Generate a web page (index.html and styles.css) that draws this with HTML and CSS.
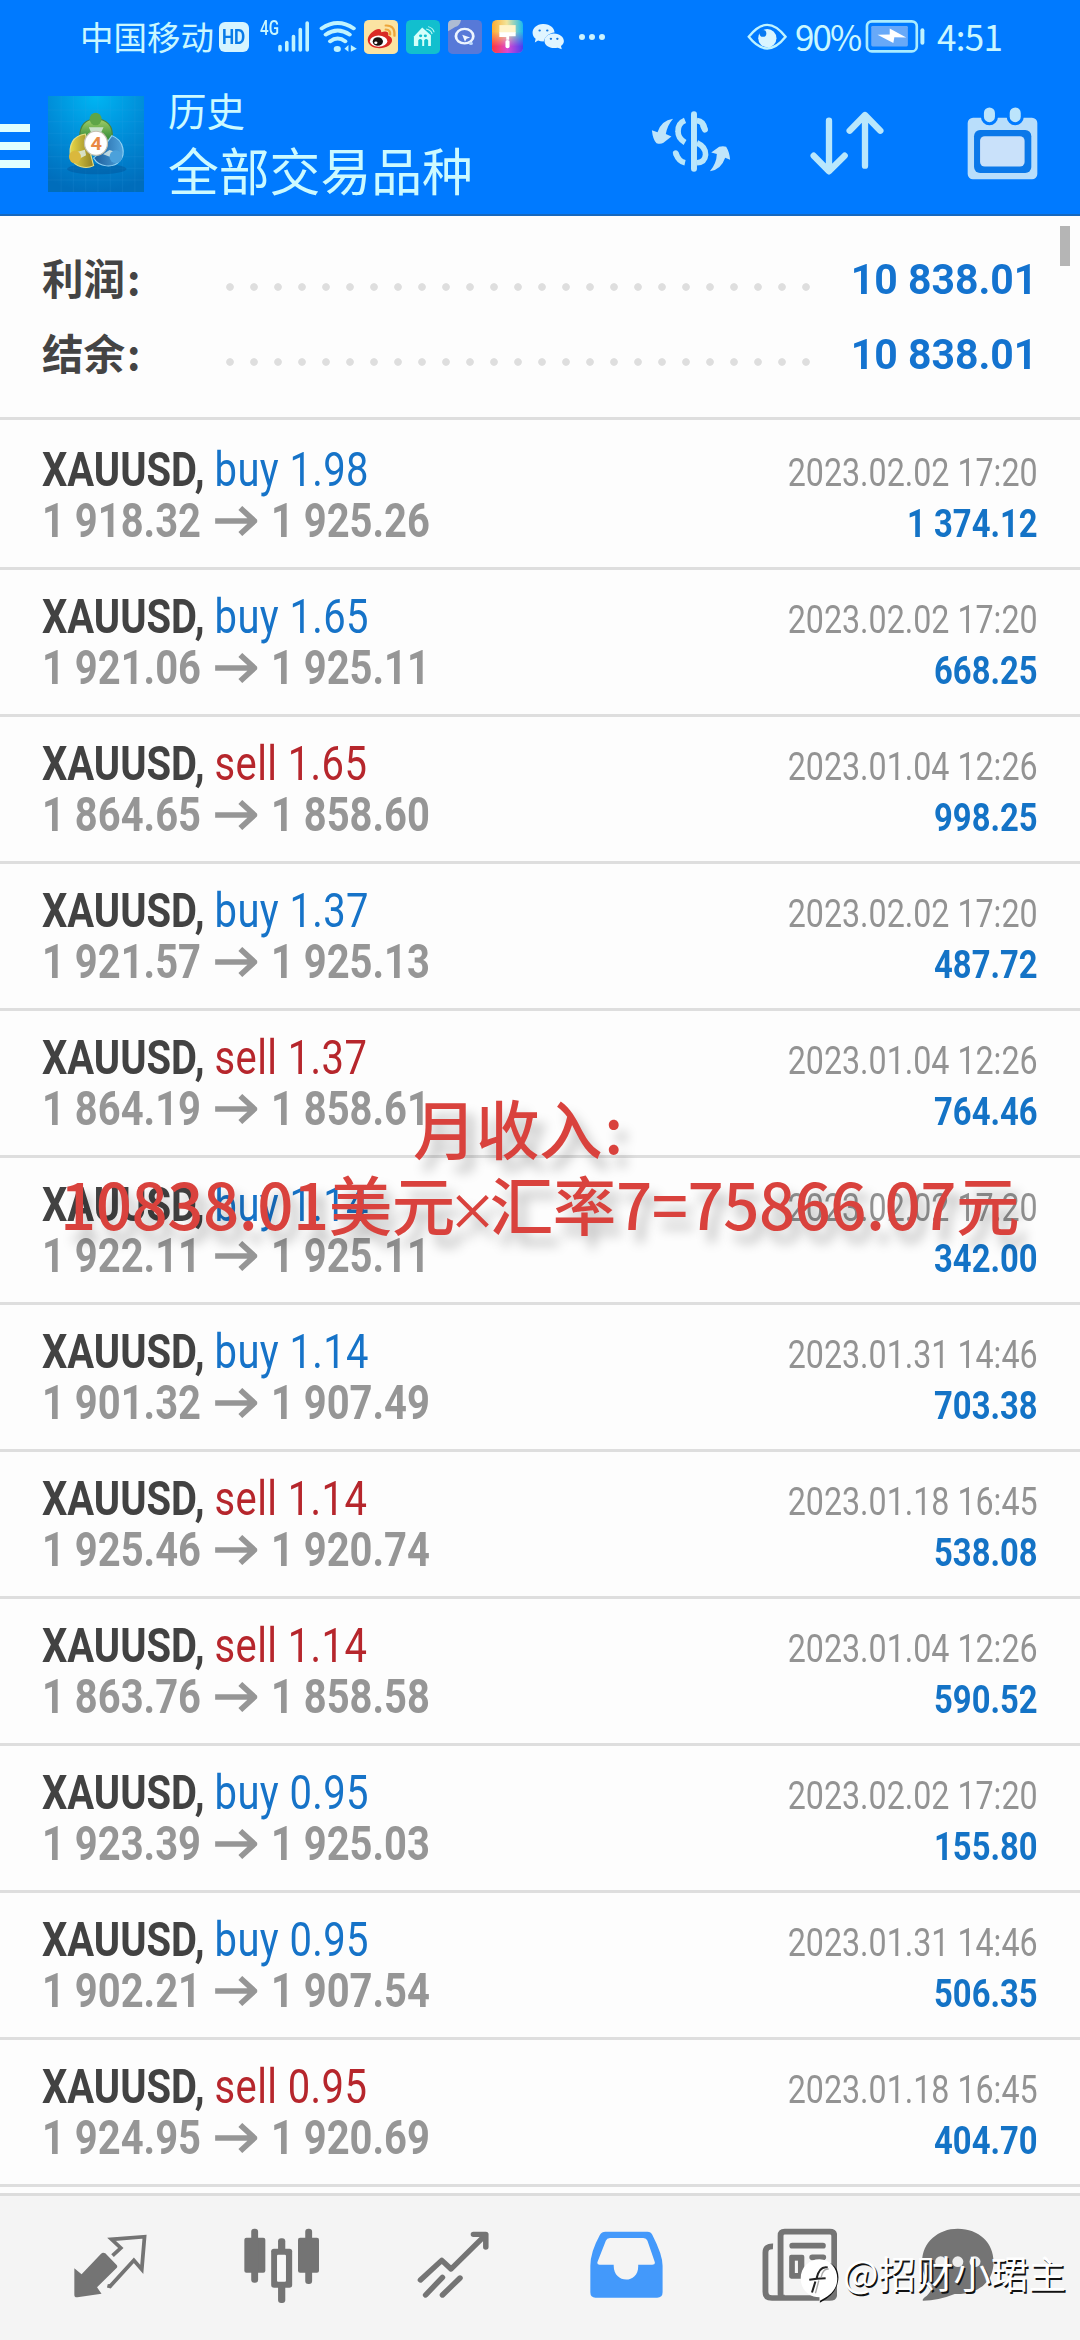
FILE: index.html
```html
<!DOCTYPE html>
<html lang="zh-CN">
<head>
<meta charset="utf-8">
<title>历史</title>
<link rel="stylesheet" href="styles.css">
</head>
<body>
<svg class="defs" aria-hidden="true">
  <symbol id="arrow" viewBox="0 0 42 30" preserveAspectRatio="none"><path d="M0 15H39M25 2L39 15L25 28" fill="none" stroke="currentColor" stroke-width="5.6"/></symbol>
</svg>
<div class="screen">
  <header class="header">
    <div class="status">
      <span class="carrier">中国移动</span>
      <span class="hd"><span>HD</span></span>
      <div class="net"><span>4G</span>
        <svg viewBox="0 0 33 31" width="33" height="31"><path d="M2 25.500V29M8.800 21.500V29M15.500 15.500V29M22.300 8.500V29M29.200 2V29" stroke="#bff3ff" stroke-width="3.600" stroke-linecap="round"/></svg>
      </div>
      <svg class="wifi" viewBox="806 60 98 96" preserveAspectRatio="none"><g fill="none" stroke="#bff3ff" stroke-width="11" stroke-linecap="round"><path d="M813 82Q853 50 893 82"/><path d="M823 101Q853 76 883 101"/><path d="M834 121Q853 104 872 121"/></g><circle cx="852" cy="144" r="9" fill="#bff3ff"/><path d="M870 143L880 132V152M886 152V132L901 143Z" fill="#bff3ff"/></svg>
      <svg class="app weibo" viewBox="918 57 86 103" preserveAspectRatio="none"><rect x="918" y="57" width="86" height="103" rx="13" fill="#fbe3a2"/><path d="M928 122C924 104 944 84 956 84C962 85 961 91 962 94C973 89 983 94 979 104C993 110 991 126 981 134C962 149 932 143 928 122Z" fill="#d92925"/><ellipse cx="955" cy="121" rx="22" ry="17" fill="#fff"/><circle cx="953" cy="122" r="13" fill="#17110f"/><circle cx="948" cy="126" r="4" fill="#fff"/><path d="M973 74Q997 73 995 105M973 86Q985 86 984 101" fill="none" stroke="#eda53a" stroke-width="6" stroke-linecap="round"/></svg>
      <svg class="app home" viewBox="1024 57 86 103" preserveAspectRatio="none"><rect x="1024" y="57" width="86" height="103" rx="14" fill="#12bfce"/><path d="M1044 107L1065 80L1087 103V136H1044Z" fill="#d5fffa"/><path d="M1055 136V118Q1060 111 1065 118V136M1070 136V118Q1075 111 1080 118V136" fill="#12bfce"/><circle cx="1061" cy="105" r="4" fill="#12bfce"/><circle cx="1073" cy="105" r="4" fill="#12bfce"/><path d="M1075 84Q1088 87 1090 100M1080 77Q1093 81 1095 94" fill="none" stroke="#b6f8f4" stroke-width="3"/></svg>
      <svg class="app search" viewBox="1130 57 86 103" preserveAspectRatio="none"><rect x="1130" y="57" width="86" height="103" rx="13" fill="#5779d8"/><path d="M1130 91V70Q1130 57 1143 57H1163Q1160 75 1148 78Q1140 84 1130 91Z" fill="#aebbd3"/><circle cx="1172" cy="106" r="22" fill="none" stroke="#edf5ff" stroke-width="7"/><path d="M1166 102L1186 110L1177 114L1173 123Z" fill="#edf5ff"/><circle cx="1188" cy="128" r="5" fill="#bddaff"/></svg>
      <svg class="app theme" viewBox="1242 63 76 97" preserveAspectRatio="none"><defs><linearGradient id="tg" x2="1" y2="0"><stop stop-color="#ffac30"/><stop offset=".48" stop-color="#f1e59b"/><stop offset="1" stop-color="#18b9ed"/></linearGradient><linearGradient id="tb" x2="1" y2="0"><stop stop-color="#ff363d"/><stop offset=".5" stop-color="#db49d1"/><stop offset="1" stop-color="#493ff0"/></linearGradient><linearGradient id="tf" x2="0" y2="1"><stop offset=".35" stop-color="#fff" stop-opacity="0"/><stop offset=".8" stop-color="#fff"/></linearGradient><mask id="tm"><rect x="1242" y="63" width="76" height="97" fill="url(#tf)"/></mask></defs><rect x="1242" y="63" width="76" height="97" rx="13" fill="url(#tg)"/><rect x="1242" y="63" width="76" height="97" rx="13" fill="url(#tb)" mask="url(#tm)"/><path d="M1260 78H1300V101H1260Z" fill="#fff4c9"/><path d="M1260 99H1300V111H1284V121H1277V113H1260Z" fill="#fff"/><rect x="1275" y="122" width="10" height="24" rx="5" fill="#fff"/></svg>
      <svg class="wechat" viewBox="1345 66 82 80" preserveAspectRatio="none"><path d="M1372 69C1390 68 1401 82 1401 94C1388 96 1377 105 1374 121Q1366 121 1360 118L1352 124L1354 113C1338 96 1349 70 1372 69Z" fill="#e0f5ff"/><path d="M1398 97C1417 96 1428 113 1423 126Q1421 131 1417 134L1419 144L1409 139C1390 144 1376 132 1376 119C1376 106 1386 98 1398 97Z" fill="#e0f5ff"/><g fill="#1678df"><circle cx="1364" cy="88" r="3"/><circle cx="1383" cy="88" r="3"/><circle cx="1392" cy="113" r="3"/><circle cx="1408" cy="113" r="3"/></g></svg>
      <svg class="more" viewBox="0 0 28 8"><g fill="#c9f2ff"><circle cx="4" cy="4" r="3"/><circle cx="14" cy="4" r="3"/><circle cx="24" cy="4" r="3"/></g></svg>
      <svg class="eye" viewBox="442 68 118 80"><path d="M447 109Q502 38 556 109Q502 178 447 109Z" fill="none" stroke="#bff3ff" stroke-width="7"/><circle cx="502" cy="113" r="27" fill="#d9f5ff"/><circle cx="489" cy="99" r="10" fill="#087bf2"/></svg>
      <span class="percent">90%</span>
      <svg class="battery" viewBox="796 60 180 100"><rect x="801" y="64" width="151" height="91" rx="15" fill="none" stroke="#a9ecff" stroke-width="8"/><rect x="814" y="78" width="111" height="62" rx="4" fill="#68a9f8"/><path d="M833 105L870 104V86L920 113L884 112L881 130Z" fill="#fff"/><rect x="963" y="85" width="12" height="50" rx="6" fill="#bff3ff"/></svg>
      <span class="clock">4:51</span>
    </div>
    <div class="appbar">
      <div class="menu"><i></i><i></i><i></i></div>
      <svg class="logo" viewBox="122 288 242 288" preserveAspectRatio="none">
        <defs><radialGradient id="lb" cx=".5" cy="0" r="1"><stop stop-color="#00b5f3"/><stop offset=".55" stop-color="#008ad6"/><stop offset="1" stop-color="#006dbb"/></radialGradient><linearGradient id="lg" x2="0" y2="1"><stop stop-color="#a3cf68"/><stop offset="1" stop-color="#1d7f30"/></linearGradient><linearGradient id="ly"><stop stop-color="#e9d846"/><stop offset="1" stop-color="#8f7f25"/></linearGradient><linearGradient id="lu"><stop stop-color="#1c5c9a"/><stop offset="1" stop-color="#4fa4de"/></linearGradient></defs>
        <rect x="122" y="288" width="242" height="288" fill="url(#lb)"/>
        <path d="M122 330H364M122 365H364M122 400H364M122 435H364M122 470H364M122 505H364M122 540H364M155 288V576M186 288V576M217 288V576M248 288V576M279 288V576M310 288V576M341 288V576" stroke="#42a4e4" stroke-width="1" opacity=".35"/>
        <ellipse cx="245" cy="507" rx="75" ry="16" fill="#044789" opacity=".35"/>
        <path d="M202 412C202 375 217 357 243 357C270 357 288 378 283 413L268 430L217 429Z" fill="url(#lg)" stroke="#4c8339" stroke-width="3"/>
        <path d="M216 402C184 407 174 436 179 472C189 504 220 507 237 497L229 460Z" fill="url(#ly)" stroke="#e4df85" stroke-width="3"/>
        <path d="M283 407C314 421 318 464 303 483C287 505 251 503 237 474L251 460Z" fill="url(#lu)" stroke="#92d2f4" stroke-width="3"/>
        <path d="M225 382H262L252 407H234ZM195 456L215 449L218 466L201 476ZM277 450L292 456L281 472L261 463Z" fill="#e0eee9" opacity=".8"/>
        <ellipse cx="242" cy="357" rx="15" ry="19" fill="#5ea547"/><ellipse cx="190" cy="471" rx="15" ry="19" fill="#dab83d"/><ellipse cx="293" cy="470" rx="16" ry="19" fill="#4ba1db"/>
        <ellipse cx="243" cy="430" rx="29" ry="36" fill="#fff" stroke="#c4c0b0" stroke-width="3"/><text x="229" y="451" class="four" textLength="29" lengthAdjust="spacingAndGlyphs">4</text>
      </svg>
      <div class="titles"><span class="title">历史</span><span class="subtitle">全部交易品种</span></div>
      <svg class="money" viewBox="150 334 240 184"><g fill="none" stroke="#b9e6fb"><path d="M279 344V508" stroke-width="18" stroke-linecap="round"/><path d="M252 362Q230 371 231 395Q230 416 252 429M288 363Q308 365 312 389M288 430Q315 442 314 466Q312 489 288 490" stroke-width="17"/><path d="M224 462Q233 486 252 490" stroke-width="17"/><path d="M307 380L312 390" stroke-width="18" stroke-linecap="round"/><path d="M224 461L226 465" stroke-width="17" stroke-linecap="round"/></g><path d="M152 392L169 398Q180 362 216 357Q199 376 194 403L211 411L187 430Q178 435 166 431Q155 421 152 392ZM327 516Q347 493 348 464L331 459L355 442Q367 438 376 442Q386 458 388 481L373 475Q361 511 327 516Z" fill="#c0e5fa"/></svg>
      <svg class="sort" viewBox="627 334 222 192"><path d="M684 363V509M638 468L684 515L731 468M792 498V352M746 393L792 346L838 393" fill="none" stroke="#b9e7fc" stroke-width="19" stroke-linecap="round" stroke-linejoin="round"/></svg>
      <svg class="calendar" viewBox="1100 320 212 218"><rect x="1102" y="352" width="208" height="184" rx="16" fill="#b9defb"/><rect x="1121" y="389" width="171" height="128" rx="18" fill="#0a78e9"/><rect x="1139" y="407" width="133" height="91" rx="14" fill="#c9e1fa"/><g fill="#bce5fc" stroke="#007aff" stroke-width="9"><rect x="1146" y="317" width="42" height="53" rx="21"/><rect x="1223" y="317" width="42" height="53" rx="21"/></g></svg>
    </div>
  </header>

  <main class="history">
    <section class="summary">
      <div class="total"><span class="label">利润<span>:</span></span><i class="dots"></i><b>10 838.01</b></div>
      <div class="total"><span class="label">结余<span>:</span></span><i class="dots"></i><b>10 838.01</b></div>
    </section>
    <section class="deals">
      <article class="deal"><div class="left"><p class="order"><b>XAUUSD,</b> <span class="buy">buy 1.98</span></p><p class="price">1 918.32<svg><use href="#arrow"/></svg>1 925.26</p></div><div class="right"><time>2023.02.02 17:20</time><b>1 374.12</b></div></article>
      <article class="deal"><div class="left"><p class="order"><b>XAUUSD,</b> <span class="buy">buy 1.65</span></p><p class="price">1 921.06<svg><use href="#arrow"/></svg>1 925.11</p></div><div class="right"><time>2023.02.02 17:20</time><b>668.25</b></div></article>
      <article class="deal"><div class="left"><p class="order"><b>XAUUSD,</b> <span class="sell">sell 1.65</span></p><p class="price">1 864.65<svg><use href="#arrow"/></svg>1 858.60</p></div><div class="right"><time>2023.01.04 12:26</time><b>998.25</b></div></article>
      <article class="deal"><div class="left"><p class="order"><b>XAUUSD,</b> <span class="buy">buy 1.37</span></p><p class="price">1 921.57<svg><use href="#arrow"/></svg>1 925.13</p></div><div class="right"><time>2023.02.02 17:20</time><b>487.72</b></div></article>
      <article class="deal"><div class="left"><p class="order"><b>XAUUSD,</b> <span class="sell">sell 1.37</span></p><p class="price">1 864.19<svg><use href="#arrow"/></svg>1 858.61</p></div><div class="right"><time>2023.01.04 12:26</time><b>764.46</b></div></article>
      <article class="deal"><div class="left"><p class="order"><b>XAUUSD,</b> <span class="buy">buy 1.14</span></p><p class="price">1 922.11<svg><use href="#arrow"/></svg>1 925.11</p></div><div class="right"><time>2023.02.02 17:20</time><b>342.00</b></div></article>
      <article class="deal"><div class="left"><p class="order"><b>XAUUSD,</b> <span class="buy">buy 1.14</span></p><p class="price">1 901.32<svg><use href="#arrow"/></svg>1 907.49</p></div><div class="right"><time>2023.01.31 14:46</time><b>703.38</b></div></article>
      <article class="deal"><div class="left"><p class="order"><b>XAUUSD,</b> <span class="sell">sell 1.14</span></p><p class="price">1 925.46<svg><use href="#arrow"/></svg>1 920.74</p></div><div class="right"><time>2023.01.18 16:45</time><b>538.08</b></div></article>
      <article class="deal"><div class="left"><p class="order"><b>XAUUSD,</b> <span class="sell">sell 1.14</span></p><p class="price">1 863.76<svg><use href="#arrow"/></svg>1 858.58</p></div><div class="right"><time>2023.01.04 12:26</time><b>590.52</b></div></article>
      <article class="deal"><div class="left"><p class="order"><b>XAUUSD,</b> <span class="buy">buy 0.95</span></p><p class="price">1 923.39<svg><use href="#arrow"/></svg>1 925.03</p></div><div class="right"><time>2023.02.02 17:20</time><b>155.80</b></div></article>
      <article class="deal"><div class="left"><p class="order"><b>XAUUSD,</b> <span class="buy">buy 0.95</span></p><p class="price">1 902.21<svg><use href="#arrow"/></svg>1 907.54</p></div><div class="right"><time>2023.01.31 14:46</time><b>506.35</b></div></article>
      <article class="deal"><div class="left"><p class="order"><b>XAUUSD,</b> <span class="sell">sell 0.95</span></p><p class="price">1 924.95<svg><use href="#arrow"/></svg>1 920.69</p></div><div class="right"><time>2023.01.18 16:45</time><b>404.70</b></div></article>
    </section>
    <i class="scrollbar"></i>
  </main>

  <nav class="tabs">
    <svg viewBox="214 205 218 228" preserveAspectRatio="none"><path d="M215 326L236 344L292 283Q298 276 305 281L338 316Q342 321 337 326L281 383L294 402L224 413Q215 414 215 405Z" fill="#747474"/><path d="M326 288L350 265L323 239L419 231L411 329L388 302L319 380L311 378" fill="none" stroke="#747474" stroke-width="11"/></svg>
    <svg viewBox="708 205 218 228" preserveAspectRatio="none"><g fill="#747474"><rect x="709" y="234" width="61" height="105" rx="6"/><rect x="865" y="234" width="61" height="105" rx="6"/><rect x="729" y="207" width="20" height="162" rx="9"/><rect x="886" y="207" width="20" height="166" rx="9"/><rect x="807" y="236" width="21" height="194" rx="9"/><rect x="787" y="267" width="61" height="117" rx="8"/></g><rect x="804" y="285" width="26" height="81" rx="3" fill="#f8f8f8"/></svg>
    <svg viewBox="1212 205 218 228" preserveAspectRatio="none"><path d="M1222 361L1284 302L1311 328L1407 230M1376 224H1412V262M1237 406L1286 353M1286 406L1337 355" fill="none" stroke="#747474" stroke-width="16" stroke-linecap="round" stroke-linejoin="round"/></svg>
    <svg viewBox="146 205 218 228" preserveAspectRatio="none"><path fill="#4399fb" fill-rule="evenodd" d="M191 216H313Q323 216 327 225Q357 285 357 318V398Q357 414 341 414H162Q147 414 147 398V318Q147 277 175 225Q180 216 191 216ZM192 243L168 306Q165 315 174 315H215C212 374 290 375 286 315H327Q337 315 334 306L313 243Q310 235 301 235H204Q195 235 192 243Z"/></svg>
    <svg viewBox="645 205 218 228" preserveAspectRatio="none"><path d="M677 260Q655 259 655 279V396Q655 415 674 415H842Q855 415 855 403V228Q855 216 842 216H711Q699 216 699 228V404Q699 414 711 414" fill="none" stroke="#747474" stroke-width="17"/><path d="M733 258H822M791 293H823" stroke="#747474" stroke-width="17" stroke-linecap="round"/><path d="M730 285H762Q768 285 768 291V357H730Q724 357 724 350V291Q724 285 730 285Z" fill="#747474"/><path d="M745 303V340" stroke="#f5f5f5" stroke-width="9"/></svg>
    <svg viewBox="1107 205 218 228" preserveAspectRatio="none"><path d="M1214 207C1276 207 1318 250 1318 306C1318 371 1267 406 1205 403Q1157 423 1113 423Q1108 419 1124 408Q1142 390 1137 374C1119 357 1110 333 1110 308C1110 247 1157 207 1214 207Z" fill="#747474"/><g fill="#eee"><circle cx="1164" cy="306" r="16"/><circle cx="1214" cy="306" r="16"/><circle cx="1264" cy="306" r="16"/></g></svg>
  </nav>

  <div class="caption"><p>月收入<span class="colon">:</span></p><p>10838.01美元<span class="times">×</span>汇率7=75866.07元</p></div>
  <div class="credit">
    <svg viewBox="752 298 120 134" preserveAspectRatio="none"><path d="M826 306Q871 313 867 360Q862 405 813 428L814 412" fill="#101010"/><path d="M812 299C842 299 864 325 864 356C864 391 840 409 812 423V412C780 412 757 388 757 356C757 323 781 299 812 299Z" fill="#fff"/><path d="M836 323Q811 318 803 357L782 360M803 357L830 355M800 365L790 398" fill="none" stroke="#222" stroke-width="6"/><path d="M839 328Q822 326 817 352M810 362Q804 386 800 400" fill="none" stroke="#aaa" stroke-width="4"/></svg>
    <span>@招财小珺主</span>
  </div>
</div>
</body>
</html>
```
FILE: styles.css
```css
* { box-sizing: border-box; }
body { margin: 0; background: #fdfdfd; font-family: Roboto, "Noto Sans CJK SC", sans-serif; }
p { margin: 0; }
.defs { position: absolute; width: 0; height: 0; }
.screen { position: relative; width: 1080px; height: 2340px; overflow: hidden; display: flex; flex-direction: column; }

.header { height: 216px; background: #007aff; border-bottom: 2px solid #1768bd; color: #c9f7ff; flex: none; }
.status { height: 73px; display: flex; align-items: center; font-size: 33.5px; line-height: 40px; white-space: nowrap; }
.status > * { flex: none; }
.carrier { width: 135px; margin-left: 80px; font-family: "Noto Sans CJK SC", sans-serif; margin-top: -2px; }
.hd { width: 30px; height: 30px; margin-left: 4px; border-radius: 6px; background: #d5f4ff; color: #087be8; font: bold 20px/31px Roboto, sans-serif; display: flex; justify-content: center; }
.hd span { transform: scaleX(.86); }
.net { width: 53px; height: 31px; margin-left: 11px; display: flex; }
.net span { width: 18px; flex: none; font: 500 20px/15px Roboto, sans-serif; transform: scaleX(.76); transform-origin: left; height: 15px; }
.net svg { flex: none; }
.wifi { width: 39px; height: 32px; margin-left: 6px; }
.app { width: 34px; height: 34px; }
.weibo { margin-left: 6px; }
.home, .search { margin-left: 8px; }
.search + .theme { width: 31px; height: 33px; margin-left: 10px; }
.wechat { width: 33px; height: 27px; margin-left: 9px; }
.more { width: 28px; height: 8px; margin-left: 13px; }
.eye { width: 40px; height: 27px; margin-left: 141px; }
.percent, .clock { font-family: "Noto Sans CJK SC", sans-serif; font-size: 35px; margin-top: -2px; }
.percent { width: 69px; margin-left: 8px; letter-spacing: -1.9px; }
.battery { width: 60px; height: 33px; margin-left: 1px; }
.clock { margin-left: 12px; letter-spacing: -.7px; }

.appbar { height: 141px; display: flex; align-items: flex-start; }
.appbar > * { flex: none; }
.menu { width: 30px; margin-top: 51px; display: flex; flex-direction: column; gap: 10px; }
.menu i { height: 8px; background: #dfffff; }
.logo { width: 96px; height: 96px; margin: 23px 0 0 18px; }
.four { font: bold 56px Roboto, sans-serif; fill: #e98945; }
.titles { width: 310px; margin: 15px 0 0 24px; display: flex; flex-direction: column; font-family: "Noto Sans CJK SC", sans-serif; color: #ccfaff; }
.title { font-size: 38.5px; line-height: 42px; }
.subtitle { font-size: 50.8px; line-height: 60px; margin-top: 9px; white-space: nowrap; }
.money { width: 80px; height: 61px; margin: 38px 0 0 173px; }
.sort { width: 74px; height: 64px; margin: 38px 0 0 79px; }
.calendar { width: 71px; height: 73px; margin: 34px 0 0 83px; }

.history { position: relative; height: 1977px; flex: none; }
.summary { height: 204px; padding: 26px 45px 0 42px; border-bottom: 3px solid #dedede; }
.total { height: 75px; display: flex; align-items: center; color: #444; }
.label { width: 176px; font: bold 41.5px/75px "Noto Sans CJK SC", sans-serif; margin-top: -4px; }
.label span { margin-left: 2px; }
.dots { width: 600px; height: 8px; margin-top: 15px; background: radial-gradient(circle, #dedede 3.4px, transparent 4.2px) 0 0 / 24px 8px; }
.total b { margin-left: auto; color: #1473cf; font-size: 42px; line-height: 75px; white-space: nowrap; transform: scaleX(.975); transform-origin: right; margin-right: -2px; }
.deal { height: 147px; padding: 0 42px; display: flex; justify-content: space-between; border-bottom: 3px solid #dedede; }
.deal:first-child { height: 150px; padding-top: 3px; }
.left { width: 560px; padding-top: 21px; transform: scaleX(.832); transform-origin: left; white-space: nowrap; }
.order, .price { height: 51px; line-height: 51px; font-size: 48px; }
.order { color: #424242; }
.buy { color: #1673c8; letter-spacing: .5px; }
.sell { color: #b6262c; letter-spacing: .5px; }
.price { display: flex; align-items: center; color: #969696; font-weight: bold; }
.price svg { width: 51px; height: 30px; margin: 0 16.5px; }
.right { padding-top: 24px; display: flex; flex-direction: column; align-items: flex-end; transform: scaleX(.83); transform-origin: right; white-space: nowrap; font-size: 39.5px; line-height: 51px; color: #939393; }
.right time { transform: scaleX(.982); transform-origin: right; }
.right b { color: #1473c6; }
.scrollbar { position: absolute; left: 1060px; top: 10px; width: 10px; height: 40px; background: #b5b5b5; }

.tabs { flex: 1; background: #f4f4f4; border-top: 3px solid #dcdcdc; padding: 32px 0 0 74px; display: grid; grid-template-columns: 170px 173px 173px 172px 159px 100px; align-content: start; }
.tabs svg { width: 75px; height: 76px; }

.caption { position: absolute; left: 60px; top: 1088px; width: 970px; font-family: "Noto Sans CJK SC", sans-serif; font-weight: 500; font-size: 63.5px; line-height: 76px; color: #d9423d; white-space: nowrap; text-shadow: 8px 12px 12px rgba(0, 0, 0, .25); }
.caption p { letter-spacing: -.45px; }
.caption p:first-child { padding-left: 353px; }
.caption .colon { margin-left: 2px; }
.caption .times { display: inline-flex; justify-content: center; width: 35px; font-size: 50px; }
.credit { position: absolute; left: 799px; top: 2252px; display: flex; font-family: "Noto Sans CJK SC", sans-serif; font-size: 37.5px; line-height: 40px; color: #fff; text-shadow: 1.5px 1.5px 0 #111; white-space: nowrap; }
.credit svg { width: 41px; height: 45px; margin-top: 7px; margin-right: 3px; }
```
